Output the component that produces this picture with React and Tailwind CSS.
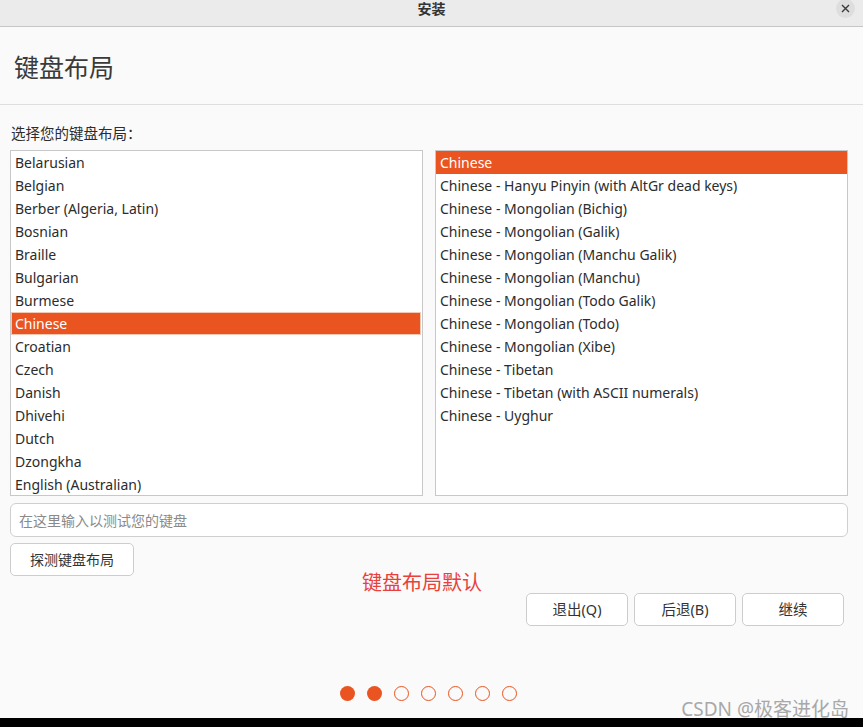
import React from 'react';

const layouts = [
  'Belarusian',
  'Belgian',
  'Berber (Algeria, Latin)',
  'Bosnian',
  'Braille',
  'Bulgarian',
  'Burmese',
  'Chinese',
  'Croatian',
  'Czech',
  'Danish',
  'Dhivehi',
  'Dutch',
  'Dzongkha',
  'English (Australian)',
];

const variants = [
  'Chinese',
  'Chinese - Hanyu Pinyin (with AltGr dead keys)',
  'Chinese - Mongolian (Bichig)',
  'Chinese - Mongolian (Galik)',
  'Chinese - Mongolian (Manchu Galik)',
  'Chinese - Mongolian (Manchu)',
  'Chinese - Mongolian (Todo Galik)',
  'Chinese - Mongolian (Todo)',
  'Chinese - Mongolian (Xibe)',
  'Chinese - Tibetan',
  'Chinese - Tibetan (with ASCII numerals)',
  'Chinese - Uyghur',
];

function App() {
  return (
    <div className="relative w-[863px] h-[727px] flex flex-col bg-[#fafafa] text-[#2c2c2c] font-['Noto_Sans','Noto_Sans_CJK_SC',sans-serif] overflow-hidden">
      {/* title bar */}
      <div className="relative h-[27px] shrink-0 flex items-center justify-center bg-[#ebebeb] border-b border-[#c6c6c6]">
        <span className="text-[14px] font-bold text-[#333] leading-none -mt-[8px]">安装</span>
        <div className="absolute right-[8px] -top-[1px] w-[19px] h-[19px] rounded-full bg-[#dedede] flex items-center justify-center">
          <svg width="9" height="9" viewBox="0 0 9 9">
            <path d="M1 1 L8 8 M8 1 L1 8" stroke="#3a3a3a" strokeWidth="1.4" />
          </svg>
        </div>
      </div>

      {/* header */}
      <div className="h-[78px] shrink-0 flex items-center px-[14px] pt-[4px] border-b border-[#dedede]">
        <h1 className="text-[25px] text-[#3a3a3a] font-normal">键盘布局</h1>
      </div>

      <div className="flex-1 flex flex-col px-[10px] pr-[15px]">
        <div className="mt-[18px] h-[20px] text-[14.5px] leading-[20px] pl-[1px]">选择您的键盘布局：</div>

        <div className="mt-[7px] flex gap-[12px]">
          <div className="w-[413px] h-[346px] bg-white border border-[#c8c8c8] overflow-hidden">
            {layouts.map((name) =>
              name === 'Chinese' ? (
                <div
                  key={name}
                  className="h-[23px] flex items-center pl-[3px] mr-[1px] bg-[#e95420] border border-[#f5c8b3] text-white text-[14px]"
                >
                  {name}
                </div>
              ) : (
                <div key={name} className="h-[23px] flex items-center pl-[4px] text-[14px]">
                  {name}
                </div>
              )
            )}
          </div>
          <div className="w-[413px] h-[346px] bg-white border border-[#c8c8c8] overflow-hidden">
            {variants.map((name, idx) => (
              <div
                key={name}
                className={
                  idx === 0
                    ? 'h-[23px] flex items-center pl-[4px] bg-[#e95420] text-white text-[14px]'
                    : 'h-[23px] flex items-center pl-[4px] text-[14px]'
                }
              >
                {name}
              </div>
            ))}
          </div>
        </div>

        <div className="mt-[7px] h-[34px] flex items-center rounded-[6px] border border-[#cfcfcf] bg-white pl-[8px] text-[14px] text-[#8a8a8a]">
          在这里输入以测试您的键盘
        </div>

        <button className="mt-[6px] w-[124px] h-[33px] rounded-[5px] border border-[#cdcdcd] bg-white text-[14px] text-[#333]">
          探测键盘布局
        </button>

        <div className="-mt-[3px] h-[20px] pl-[352px] text-[20px] leading-[20px] text-[#e8413b]">键盘布局默认</div>

        <div className="flex justify-end gap-[6px] pr-[4px]">
          {['退出(Q)', '后退(B)', '继续'].map((label) => (
            <button
              key={label}
              className="w-[102px] h-[33px] rounded-[5px] border border-[#cdcdcd] bg-white text-[14.5px] text-[#333]"
            >
              {label}
            </button>
          ))}
        </div>

        <div className="mt-[60px] ml-[330px] flex gap-[12px]">
          {[0, 1, 2, 3, 4, 5, 6].map((i) => (
            <div
              key={i}
              className={
                i < 2
                  ? 'w-[15px] h-[15px] rounded-full bg-[#e95420]'
                  : 'w-[15px] h-[15px] rounded-full border-[1.5px] border-[#e95420]'
              }
            />
          ))}
        </div>
      </div>

      <div className="absolute right-[14px] bottom-[7px] text-[19px] leading-[22px] text-[#a8a8a8]">
        CSDN @极客进化岛
      </div>

      <div className="h-[9px] shrink-0 bg-black" />
    </div>
  );
}

export default App;
